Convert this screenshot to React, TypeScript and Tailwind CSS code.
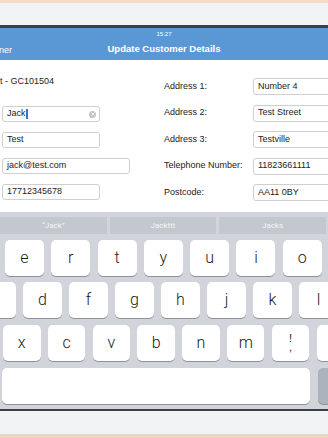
import React from "react";

const Key = ({ label, w = "w-[39px]" }: { label?: React.ReactNode; w?: string }) => (
  <div
    className={`${w} h-[36px] shrink-0 rounded-[5px] bg-white shadow-[0_1px_0_#8d9198] flex items-center justify-center text-[16px] text-[#1a1a1a] font-['Roboto',sans-serif] font-light`}
  >
    {label}
  </div>
);

const Field = ({ value, w, cursor, clear }: { value: string; w: string; cursor?: boolean; clear?: boolean }) => (
  <div className={`${w} h-[16px] rounded-[3px] border border-[#cfcfcf] bg-white flex items-center pl-[4px] pr-[3px] text-[9px] text-[#222]`}>
    <span>{value}</span>
    {cursor && <span className="ml-[0.5px] w-[1.5px] h-[10px] bg-[#3a6fd8]" />}
    {clear && (
      <span className="ml-auto w-[7px] h-[7px] rounded-full bg-[#c4c4c8] flex items-center justify-center">
        <svg width="4" height="4" viewBox="0 0 4 4">
          <path d="M0.6 0.6 L3.4 3.4 M3.4 0.6 L0.6 3.4" stroke="white" strokeWidth="0.9" />
        </svg>
      </span>
    )}
  </div>
);

const RField = ({ label, value }: { label: string; value: string }) => (
  <div className="flex items-center h-[17px]">
    <div className="w-[89px] text-[9px] text-[#222]">{label}</div>
    <div className="w-[90px] shrink-0 h-[17px] rounded-[3px] border border-[#cfcfcf] bg-white flex items-center pl-[4px] text-[9px] text-[#222]">
      {value}
    </div>
  </div>
);

const Stack = ({ t }: { t: string }) => (
  <span className="whitespace-pre-line text-center leading-[9px] text-[11px] font-['Liberation_Sans',Arial,sans-serif] font-normal text-[#222]">
    {t}
  </span>
);

export default function App() {
  const row1 = ["", "", "e", "r", "t", "y", "u", "i", "o", ""];
  const row2 = ["", "", "d", "f", "g", "h", "j", "k", "l"];
  const row3 = ["", "x", "c", "v", "b", "n", "m"];
  return (
    <div className="w-[328px] h-[438px] overflow-hidden bg-[#f2f3f5] flex flex-col font-['Liberation_Sans',Arial,sans-serif]">
      <div className="h-[3px] bg-[#f4dcc8] shrink-0" />
      <div className="h-[22px] bg-[#f2f3f5] shrink-0" />
      <div className="h-[3px] bg-[#3c4045] shrink-0" />
      {/* header */}
      <div className="h-[32px] bg-[#5a98d5] shrink-0 relative text-white">
        <div className="h-[12px] flex items-center justify-center text-[6px]">15:27</div>
        <div className="h-[18px] flex items-center justify-center text-[9.5px] font-semibold">
          Update Customer Details
        </div>
        <div className="absolute left-0 top-[14px] h-[18px] flex items-center text-[9px] -ml-[1px]">ner</div>
      </div>
      {/* content */}
      <div className="h-[152px] bg-white shrink-0 flex">
        <div className="w-[164px] shrink-0 pl-[2px]">
          <div className="mt-[15px] h-[12px] leading-[12px] text-[9px] text-[#222] -ml-[2px]">t - GC101504</div>
          <div className="mt-[19px] flex flex-col gap-[10px]">
            <Field value="Jack" w="w-[98px]" cursor clear />
            <Field value="Test" w="w-[98px]" />
            <Field value="jack@test.com" w="w-[128px]" />
            <Field value="17712345678" w="w-[98px]" />
          </div>
        </div>
        <div className="flex-1 pt-[18px] flex flex-col gap-[9.5px]">
          <RField label="Address 1:" value="Number 4" />
          <RField label="Address 2:" value="Test Street" />
          <RField label="Address 3:" value="Testville" />
          <RField label="Telephone Number:" value="11823661111" />
          <RField label="Postcode:" value="AA11 0BY" />
        </div>
      </div>
      {/* keyboard */}
      <div className="h-[197px] bg-[#d1d4da] shrink-0 overflow-hidden pt-[5px]">
        <div className="flex gap-[3px] h-[17px] pr-[2px]">
          {["\u201CJack\u201D", "Jackttt", "Jacks"].map((s) => (
            <div
              key={s}
              className="flex-1 bg-[#c3c7ce] flex items-center justify-center text-[8px] text-[#f5f6f8] font-['Roboto',sans-serif]"
            >
              {s}
            </div>
          ))}
        </div>
        <div className="mt-[6px] flex gap-[7.3px] ml-[-87.6px]">
          {row1.map((k, i) => (
            <Key key={i} label={k} />
          ))}
        </div>
        <div className="mt-[6px] flex gap-[7px] ml-[-69px]">
          {row2.map((k, i) => (
            <Key key={i} label={k} />
          ))}
        </div>
        <div className="mt-[7px] flex gap-[7.3px] ml-[-41.8px]">
          {row3.map((k, i) => (
            <Key key={i} label={k} w="w-[37.5px]" />
          ))}
          <Key w="w-[37.5px]" label={<Stack t={"!\n,"} />} />
          <Key w="w-[37.5px]" />
        </div>
        <div className="mt-[7px] flex gap-[8px] pl-[2px]">
          <div className="w-[308px] h-[36px] shrink-0 rounded-[5px] bg-white shadow-[0_1px_0_#8d9198]" />
          <div className="w-[60px] h-[36px] shrink-0 rounded-[5px] bg-[#adb3bc] shadow-[0_1px_0_#8d9198]" />
        </div>
      </div>
      <div className="h-[2px] bg-[#3c4045] shrink-0" />
      <div className="h-[23px] bg-[#f2f3f5] shrink-0" />
      <div className="h-[4px] bg-[#f1d6bf] shrink-0" />
    </div>
  );
}
